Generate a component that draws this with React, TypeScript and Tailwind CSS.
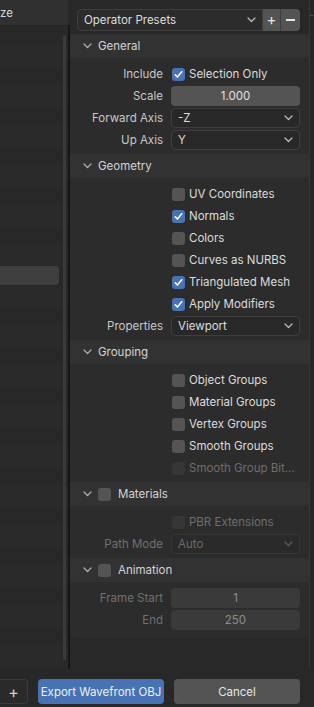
import React from 'react';

const font = { fontFamily: 'Inter, "Noto Sans", sans-serif' };

const Chevron: React.FC<{ className?: string }> = ({ className = '' }) => (
  <svg width="9" height="6" viewBox="0 0 9 6" fill="none" className={className}>
    <path d="M1 1L4.5 4.5L8 1" stroke="currentColor" strokeWidth="1.2" strokeLinecap="round" strokeLinejoin="round" />
  </svg>
);

const Check: React.FC<{ on?: boolean; off?: boolean }> = ({ on, off }) => (
  <div
    className={`w-[13px] h-[13px] rounded-[3px] flex items-center justify-center shrink-0 ${
      on ? 'bg-[#4772b3]' : off ? 'bg-[#363636]' : 'bg-[#545454]'
    }`}
  >
    {on && (
      <svg width="11" height="11" viewBox="0 0 11 11" fill="none">
        <path d="M2.2 5.8L4.4 8L8.8 2.8" stroke="#ffffff" strokeWidth="1.6" strokeLinecap="round" strokeLinejoin="round" />
      </svg>
    )}
  </div>
);

const Row: React.FC<{ label?: string; off?: boolean; children: React.ReactNode }> = ({ label, off, children }) => (
  <div className="flex h-[20px] items-center">
    <div className={`w-[101px] pr-[8px] text-right whitespace-nowrap ${off ? 'text-[#707070]' : 'text-[#c8c8c8]'}`}>
      {label}
    </div>
    <div className="w-[129px]">{children}</div>
  </div>
);

const CheckRow: React.FC<{ text: string; on?: boolean; off?: boolean }> = ({ text, on, off }) => (
  <Row>
    <div className="flex items-center gap-[4px] pl-[1px]">
      <Check on={on} off={off} />
      <span className={`whitespace-nowrap ${off ? 'text-[#6e6e6e]' : 'text-[#dcdcdc]'}`}>{text}</span>
    </div>
  </Row>
);

const Select: React.FC<{ value: string; off?: boolean }> = ({ value, off }) => (
  <div
    className={`h-[20px] rounded-[4px] border flex items-center justify-between pl-[6px] pr-[6px] ${
      off ? 'bg-[#2a2a2a] border-[#363636] text-[#6a6a6a]' : 'bg-[#282828] border-[#3e3e3e] text-[#dcdcdc]'
    }`}
  >
    <span>{value}</span>
    <Chevron className={off ? 'text-[#5a5a5a]' : 'text-[#bdbdbd]'} />
  </div>
);

const NumField: React.FC<{ value: string; off?: boolean }> = ({ value, off }) => (
  <div
    className={`h-[20px] rounded-[4px] flex items-center justify-center ${
      off ? 'bg-[#3a3a3a] text-[#8c8c8c]' : 'bg-[#545454] text-[#e0e0e0]'
    }`}
  >
    {value}
  </div>
);

const Panel: React.FC<{ title: string; toggle?: boolean; last?: boolean; children: React.ReactNode }> = ({
  title,
  toggle,
  last,
  children,
}) => (
  <div className={`bg-[#2c2c2c] ${last ? 'rounded-b-[5px] pb-[8px]' : 'pb-[4px]'}`}>
    <div className="h-[24px] bg-[#323232] flex items-center pl-[13px] text-[#d4d4d4]">
      <Chevron className="text-[#b0b0b0]" />
      {toggle ? (
        <div className="flex items-center ml-[6px] gap-[7px]">
          <Check />
          <span>{title}</span>
        </div>
      ) : (
        <span className="ml-[6px]">{title}</span>
      )}
    </div>
    <div className="pt-[6px] flex flex-col gap-[2px]">{children}</div>
  </div>
);

export default function App() {
  const rows = Array.from({ length: 33 }, (_, i) => i);

  return (
    <div className="w-[314px] h-[707px] bg-[#282828] flex flex-col overflow-hidden text-[11.5px] leading-[16px]" style={font}>
      <div className="flex h-[669px]">
        {/* file list */}
        <div className="w-[68px] flex flex-col relative overflow-hidden">
          <div className="h-[26px] shrink-0 bg-[#303030] border-b border-[#232323] flex items-center text-[#d6d6d6]">
            <span>ze</span>
          </div>
          <div className="flex-1 flex flex-col">
            {rows.map((i) => (
              <div key={i} className={`h-[20px] shrink-0 ${i % 2 ? 'bg-[#2a2a2a]' : 'bg-[#282828]'}`}>
                {i === 12 && <div className="h-[19px] w-[59px] rounded-r-[4px] bg-[#3f3f3f]" />}
              </div>
            ))}
          </div>
          <div className="absolute left-[63px] top-[35px] w-[3px] h-[625px] rounded-full bg-[#3a3a3a]" />
        </div>
        <div className="w-[2px] bg-[#161616] mt-[25px]" />

        {/* operator settings */}
        <div className="w-[239px] flex flex-col">
          <div className="pt-[9px] pl-[7px] pr-[9px] flex">
            <div className="w-[186px] h-[22px] rounded-l-[4px] border border-[#3e3e3e] bg-[#2c2c2c] flex items-center justify-between pl-[6px] pr-[6px] text-[#dcdcdc]">
              <span>Operator Presets</span>
              <Chevron className="text-[#bdbdbd]" />
            </div>
            <div className="w-[18px] h-[22px] bg-[#545454] border-r border-[#3e3e3e] flex items-center justify-center text-[#e6e6e6] text-[15px]">
              +
            </div>
            <div className="w-[19px] h-[22px] bg-[#545454] rounded-r-[4px] flex items-center justify-center">
              <div className="w-[9px] h-[1.5px] bg-[#e6e6e6]" />
            </div>
          </div>

          <div className="mt-[3px] flex flex-col">
            <Panel title="General">
              <Row label="Include">
                <div className="flex items-center gap-[4px] pl-[1px]">
                  <Check on />
                  <span className="text-[#dcdcdc]">Selection Only</span>
                </div>
              </Row>
              <Row label="Scale">
                <NumField value="1.000" />
              </Row>
              <Row label="Forward Axis">
                <Select value="-Z" />
              </Row>
              <Row label="Up Axis">
                <Select value="Y" />
              </Row>
            </Panel>

            <Panel title="Geometry">
              <CheckRow text="UV Coordinates" />
              <CheckRow text="Normals" on />
              <CheckRow text="Colors" />
              <CheckRow text="Curves as NURBS" />
              <CheckRow text="Triangulated Mesh" on />
              <CheckRow text="Apply Modifiers" on />
              <Row label="Properties">
                <Select value="Viewport" />
              </Row>
            </Panel>

            <Panel title="Grouping">
              <CheckRow text="Object Groups" />
              <CheckRow text="Material Groups" />
              <CheckRow text="Vertex Groups" />
              <CheckRow text="Smooth Groups" />
              <CheckRow text="Smooth Group Bit..." off />
            </Panel>

            <Panel title="Materials" toggle>
              <CheckRow text="PBR Extensions" off />
              <Row label="Path Mode" off>
                <Select value="Auto" off />
              </Row>
            </Panel>

            <Panel title="Animation" toggle last>
              <Row label="Frame Start" off>
                <NumField value="1" off />
              </Row>
              <Row label="End" off>
                <NumField value="250" off />
              </Row>
            </Panel>
          </div>
        </div>

        <div className="w-[1px] bg-[#363636]" />
        <div className="flex-1 bg-[#272727] flex flex-col">
          <div className="mt-[15px] h-[1px] w-[3px] bg-[#7a3a44]" />
        </div>
      </div>

      {/* bottom bar */}
      <div className="flex-1 flex items-start pt-[10px]">
        <div className="w-[28px] h-[25px] rounded-r-[4px] border border-l-0 border-[#3a3a3a] bg-[#2a2a2a] flex items-center justify-center text-[#d0d0d0] text-[16px]">
          +
        </div>
        <div className="ml-[10px] w-[126px] h-[25px] rounded-[4px] bg-[#4772b3] flex items-center justify-center text-[#f0f0f0]">
          Export Wavefront OBJ
        </div>
        <div className="ml-[10px] w-[126px] h-[25px] rounded-[4px] bg-[#545454] flex items-center justify-center text-[#e6e6e6]">
          Cancel
        </div>
      </div>
    </div>
  );
}
